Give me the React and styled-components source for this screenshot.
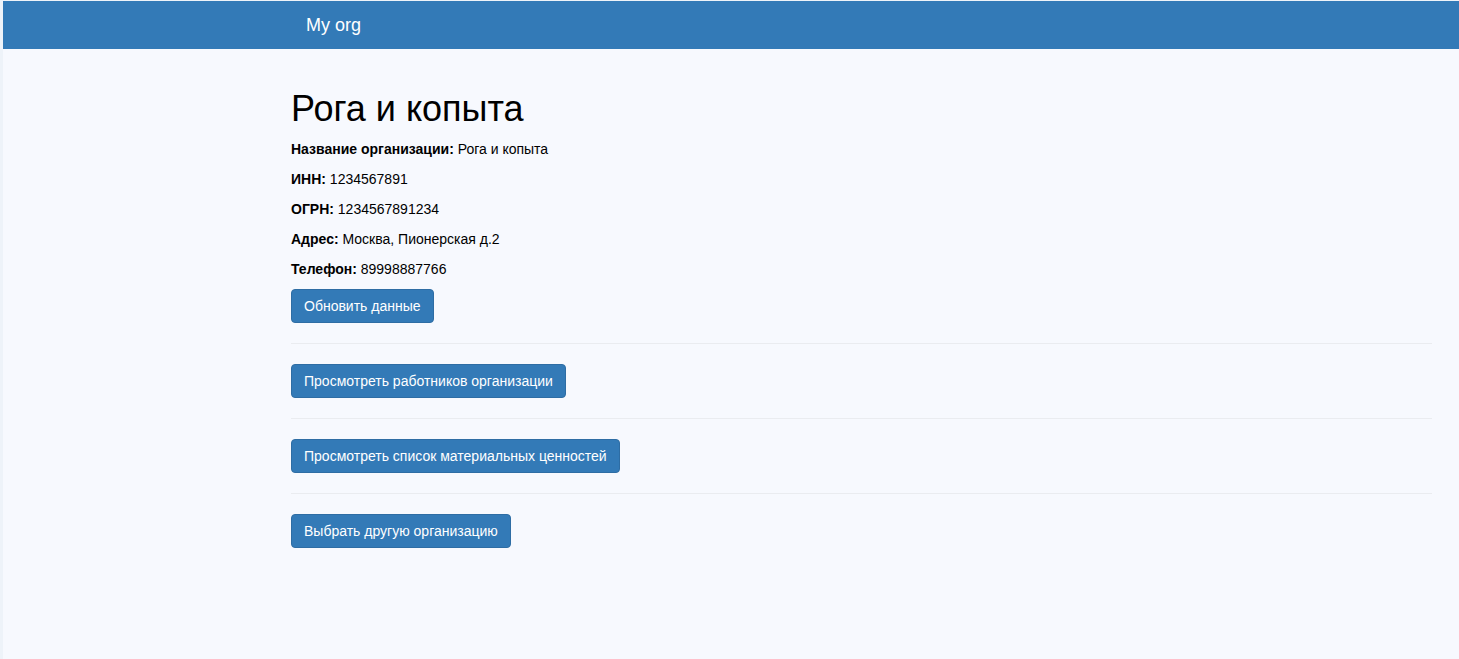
import React from "react";
import styled, { createGlobalStyle } from "styled-components";

const GlobalStyle = createGlobalStyle`
  html, body {
    margin: 0;
    padding: 0;
    background: #f7f9fe;
  }
  body {
    font-family: "Liberation Sans", Arial, sans-serif;
    font-size: 14px;
    line-height: 1.42857143;
    color: #000;
  }
`;

const Page = styled.div`
  min-height: 659px;
  box-sizing: border-box;
  border-left: 3px solid #eef3f9;
  border-top: 1px solid #eef3f9;
  background: #f7f9fe;
`;

const NavBar = styled.nav`
  height: 48px;
  background: #337ab7;
  display: flex;
  align-items: center;
  padding-left: 288px;
`;

const Brand = styled.a`
  color: #fff;
  font-size: 18px;
  line-height: 20px;
  padding: 0 15px;
  text-decoration: none;
  cursor: pointer;
`;

const Content = styled.main`
  padding: 20px 27px 40px 288px;
`;

const Title = styled.h1`
  font-size: 36px;
  font-weight: 500;
  line-height: 1.1;
  margin: 20px 0 10px;
`;

const Field = styled.p`
  margin: 0 0 10px;
  line-height: 20px;
`;

const Label = styled.b`
  font-weight: 700;
`;

const Button = styled.button`
  display: inline-block;
  font-family: inherit;
  font-size: 14px;
  line-height: 1.42857143;
  padding: 6px 12px;
  color: #fff;
  background: #337ab7;
  border: 1px solid #2e6da4;
  border-radius: 4px;
  cursor: pointer;
  &:hover {
    background: #286090;
  }
`;

const Divider = styled.hr`
  margin: 20px 0;
  border: 0;
  border-top: 1px solid #eaecf0;
`;

const org = {
  name: "Рога и копыта",
  inn: "1234567891",
  ogrn: "1234567891234",
  address: "Москва, Пионерская д.2",
  phone: "89998887766",
};

export default function App() {
  return (
    <Page>
      <GlobalStyle />
      <NavBar>
        <Brand>My org</Brand>
      </NavBar>
      <Content>
        <Title>{org.name}</Title>
        <Field>
          <Label>Название организации:</Label> {org.name}
        </Field>
        <Field>
          <Label>ИНН:</Label> {org.inn}
        </Field>
        <Field>
          <Label>ОГРН:</Label> {org.ogrn}
        </Field>
        <Field>
          <Label>Адрес:</Label> {org.address}
        </Field>
        <Field>
          <Label>Телефон:</Label> {org.phone}
        </Field>
        <Button>Обновить данные</Button>
        <Divider />
        <Button>Просмотреть работников организации</Button>
        <Divider />
        <Button>Просмотреть список материальных ценностей</Button>
        <Divider />
        <Button>Выбрать другую организацию</Button>
      </Content>
    </Page>
  );
}
